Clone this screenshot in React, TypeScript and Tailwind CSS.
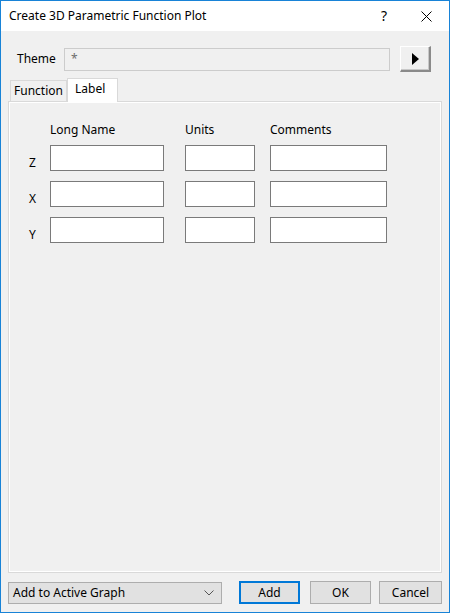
import React from 'react';

const font = { fontFamily: '"Noto Sans", "Liberation Sans", sans-serif' };

const rows = ['Z', 'X', 'Y'];

const TextBox: React.FC<{ width: string }> = ({ width }) => (
  <div className={`${width} h-[26px] border border-[#7a7a7a] bg-white`} />
);

const Button: React.FC<{ label: string; width: string; primary?: boolean }> = ({ label, width, primary }) => (
  <div
    className={`${width} h-[23px] flex items-center justify-center bg-[#e1e1e1] text-[12px] text-black ${
      primary ? 'border-2 border-[#0078d7]' : 'border border-[#adadad]'
    }`}
  >
    {label}
  </div>
);

export default function App() {
  return (
    <div
      className="w-[450px] h-[613px] border border-[#1883d7] bg-[#f0f0f0] flex flex-col text-[12px] text-black leading-[16px]"
      style={font}
    >
      {/* title bar */}
      <div className="h-[30px] bg-white flex items-center pl-[8px] shrink-0">
        <span className="flex-1">Create 3D Parametric Function Plot</span>
        <span className="w-[14px] text-[14px] mr-[30px] text-center">?</span>
        <svg width="11" height="11" viewBox="0 0 11 11" className="mr-[17px]">
          <path d="M0.5 0.5 L10.5 10.5 M10.5 0.5 L0.5 10.5" stroke="#000" strokeWidth="1" />
        </svg>
      </div>

      {/* theme row */}
      <div className="flex items-center pt-[15px] pl-[16px]">
        <span className="w-[47px]">Theme</span>
        <div className="w-[326px] h-[23px] border border-[#cccccc] bg-[#f0f0f0] flex items-center pl-[6px] text-[#6d6d6d]">
          *
        </div>
        <div className="ml-[10px] w-[31px] h-[26px] bg-[#f0f0f0] border-t border-l border-t-white border-l-white border-r-2 border-b-2 border-r-[#8a8a8a] border-b-[#8a8a8a] shadow-[inset_-1px_-1px_0_#c8c8c8] flex items-center justify-center">
          <svg width="7" height="12" viewBox="0 0 7 12">
            <path d="M0 0 L7 6 L0 12 Z" fill="#000" />
          </svg>
        </div>
      </div>

      {/* tabs */}
      <div className="flex items-end mt-[6px] px-[7px] h-[23px]">
        <div className="ml-[2px] w-[57px] h-[21px] border border-b-0 border-[#d9d9d9] bg-[#f0f0f0] flex items-center justify-center">
          Function
        </div>
        <div className="relative z-10 -mb-px w-[51px] h-[24px] border border-b-0 border-[#d9d9d9] bg-white flex items-start pl-[7px] pt-[2px]">
          Label
        </div>
      </div>

      {/* panel */}
      <div className="mx-[7px] w-[434px] h-[472px] border border-[#d9d9d9] shadow-[inset_0_0_0_1px_#ffffff] bg-[#f0f0f0] pt-[20px]">
        <div className="flex pl-[41px]">
          <span className="w-[135px]">Long Name</span>
          <span className="w-[85px]">Units</span>
          <span>Comments</span>
        </div>
        <div className="flex flex-col gap-[10px] mt-[7px]">
          {rows.map((r) => (
            <div key={r} className="flex items-start">
              <span className="w-[41px] pl-[20px] pt-[10px]">{r}</span>
              <TextBox width="w-[114px]" />
              <div className="w-[21px]" />
              <TextBox width="w-[70px]" />
              <div className="w-[15px]" />
              <TextBox width="w-[117px]" />
            </div>
          ))}
        </div>
      </div>

      {/* bottom bar */}
      <div className="flex items-center mt-[8px] px-[7px]">
        <div className="w-[214px] h-[22px] border border-[#adadad] bg-[#e1e1e1] flex items-center pl-[4px] pr-[7px]">
          <span className="flex-1">Add to Active Graph</span>
          <svg width="10" height="6" viewBox="0 0 10 6">
            <path d="M0.5 0.5 L5 5 L9.5 0.5" stroke="#555" strokeWidth="1" fill="none" />
          </svg>
        </div>
        <div className="ml-[17px]">
          <Button label="Add" width="w-[61px]" primary />
        </div>
        <div className="ml-[10px]">
          <Button label="OK" width="w-[61px]" />
        </div>
        <div className="ml-[8px]">
          <Button label="Cancel" width="w-[63px]" />
        </div>
      </div>
    </div>
  );
}
